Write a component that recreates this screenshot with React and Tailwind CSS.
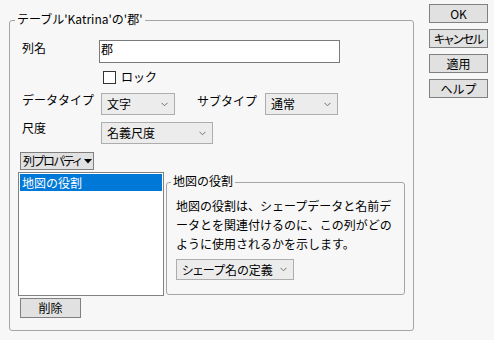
import React from "react";

const Chevron = () => (
  <svg width="7" height="5" viewBox="0 0 7 5" className="shrink-0">
    <path d="M0.5 0.8 L3.5 3.8 L6.5 0.8" fill="none" stroke="#707070" strokeWidth="1" />
  </svg>
);

const Select = ({ w, h = "h-[22px]", textClass = "", children }) => (
  <div className={`${w} ${h} border border-[#adadad] bg-[#ececec] flex items-center justify-between pl-[5px] pr-[6px] leading-[14px] shrink-0`}>
    <span className={`whitespace-nowrap ${textClass}`}>{children}</span>
    <Chevron />
  </div>
);

const Btn = ({ className = "", children }) => (
  <div className={`border border-[#808080] bg-[#e1e1e1] flex items-center justify-center leading-[14px] whitespace-nowrap ${className}`}>
    {children}
  </div>
);

export default function App() {
  return (
    <div className="w-[494px] h-[340px] bg-[#f7f7f7] flex text-[12px] text-black font-['Noto_Sans_CJK_JP','Noto_Sans',sans-serif] overflow-hidden">
      <div className="pl-[9px] pt-[20px]">
        <div className="relative w-[405px] h-[311px] border border-[#a5a5a5] rounded-[3px] pt-[19px] pl-[8px]">
          <span className="absolute left-[5px] -top-[10px] px-[2px] bg-[#f7f7f7] leading-[16px] whitespace-nowrap">
            テーブル'Katrina'の'郡'
          </span>

          <div className="flex items-start">
            <div className="ml-[4px] w-[77px] leading-[14px] mt-[1px]">列名</div>
            <div className="w-[241px] h-[23px] border border-[#7a7a7a] bg-white pl-[1px] pt-[1px] leading-[14px]">郡</div>
          </div>

          <div className="flex items-center mt-[7px]">
            <div className="ml-[85px] w-[13px] h-[13px] border border-[#333333] bg-white" />
            <div className="ml-[5px] leading-[14px]">ロック</div>
          </div>

          <div className="flex items-start mt-[9px]">
            <div className="ml-[4px] w-[79px] leading-[14px] whitespace-nowrap">データタイプ</div>
            <Select w="w-[74px]">文字</Select>
            <div className="ml-[22px] w-[68px] leading-[14px] mt-[1px] whitespace-nowrap">サブタイプ</div>
            <Select w="w-[73px]">通常</Select>
          </div>

          <div className="flex items-start mt-[7px]">
            <div className="ml-[4px] w-[79px] leading-[14px] -mt-[1px]">尺度</div>
            <Select w="w-[112px]">名義尺度</Select>
          </div>

          <div className="mt-[8px] ml-[2px] w-[74px] h-[18px] border border-[#808080] bg-[#e1e1e1] flex items-center pl-[2px] leading-[14px] whitespace-nowrap overflow-hidden">
            <span className="[font-feature-settings:'palt'] tracking-[-1.4px]">列プロパティ</span>
            <svg width="8" height="5" viewBox="0 0 8 5" className="ml-[4px] shrink-0">
              <path d="M0 0 L8 0 L4 4.5 Z" fill="#000" />
            </svg>
          </div>

          <div className="flex items-start mt-[2px]">
            <div className="w-[146px] h-[124px] border border-[#828282] bg-white p-[1px] shrink-0">
              <div className="h-[17px] bg-[#0078d7] text-white flex items-center pl-[2px] leading-[14px]">地図の役割</div>
            </div>
            <div className="relative ml-[2px] mt-[10px] w-[239px] h-[113px] border border-[#a5a5a5] rounded-[3px] pt-[13px] pl-[9px]">
              <span className="absolute left-[4px] -top-[10px] px-[2px] bg-[#f7f7f7] leading-[16px] whitespace-nowrap">地図の役割</span>
              <div className="leading-[19px] whitespace-nowrap">
                地図の役割は、シェープデータと名前デ<br />
                ータとを関連付けるのに、この列がどの<br />
                ように使用されるかを示します。
              </div>
              <div className="mt-[6px]">
                <Select w="w-[118px]" h="h-[21px]" textClass="[font-feature-settings:'palt']">シェープ名の定義</Select>
              </div>
            </div>
          </div>

          <Btn className="mt-[2px] ml-[2px] w-[61px] h-[20px]">削除</Btn>
        </div>
      </div>

      <div className="ml-[15px] pt-[4px] flex flex-col gap-[6px]">
        <Btn className="w-[59px] h-[19px]">OK</Btn>
        <Btn className="w-[59px] h-[19px] [font-feature-settings:'palt'] tracking-[-1px]">キャンセル</Btn>
        <Btn className="w-[59px] h-[19px]">適用</Btn>
        <Btn className="w-[59px] h-[19px]">ヘルプ</Btn>
      </div>
    </div>
  );
}
